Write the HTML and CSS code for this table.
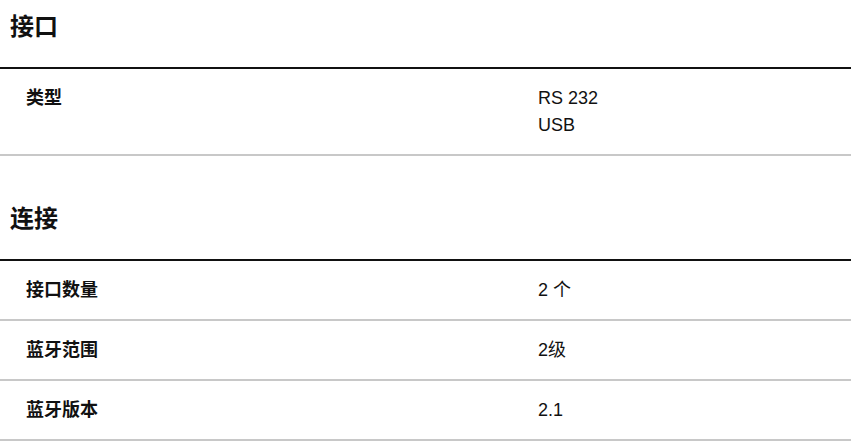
FILE: index.html
```html
<!DOCTYPE html>
<html lang="zh-CN">
<head>
<meta charset="utf-8">
<link rel="stylesheet" href="styles.css">
</head>
<body>
<section class="section">
  <h2 class="heading">接口</h2>
  <div class="table">
    <div class="row">
      <div class="label">类型</div>
      <div class="value">RS 232<br>USB</div>
    </div>
  </div>
</section>
<section class="section">
  <h2 class="heading">连接</h2>
  <div class="table">
    <div class="row">
      <div class="label">接口数量</div>
      <div class="value">2 个</div>
    </div>
    <div class="row">
      <div class="label">蓝牙范围</div>
      <div class="value">2级</div>
    </div>
    <div class="row">
      <div class="label">蓝牙版本</div>
      <div class="value">2.1</div>
    </div>
  </div>
</section>
</body>
</html>
```
FILE: styles.css
```css
html, body {
  margin: 0;
  padding: 0;
  background: #fff;
}
body {
  font-family: "Liberation Sans", "Noto Sans CJK SC", sans-serif;
  color: #111;
}
.section + .section {
  margin-top: 36px;
}
.heading {
  margin: 0;
  font-size: 24px;
  font-weight: 700;
  line-height: 36px;
  padding: 9px 10px 22px;
  color: #111;
}
.table {
  border-top: 2px solid #111;
}
.row {
  display: grid;
  grid-template-columns: 512px 1fr;
  padding: 15.5px 0 15.5px 26px;
  border-bottom: 2px solid #c8c8c8;
  font-size: 18px;
  line-height: 27px;
}
.label {
  font-weight: 700;
}
.value {
  font-weight: 400;
}
```
